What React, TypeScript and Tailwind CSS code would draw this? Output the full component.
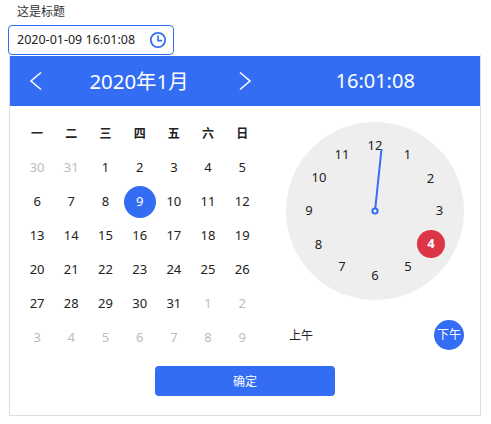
const font = { fontFamily: '"Noto Sans", "Noto Sans CJK SC", sans-serif' };

const weeks = ['一', '二', '三', '四', '五', '六', '日'];
type Day = { n: number; muted?: boolean; selected?: boolean };
const days: Day[] = [
  { n: 30, muted: true }, { n: 31, muted: true },
  ...Array.from({ length: 31 }, (_, i) => ({ n: i + 1, selected: i === 8 })),
  { n: 1, muted: true }, { n: 2, muted: true }, { n: 3, muted: true }, { n: 4, muted: true },
  { n: 5, muted: true }, { n: 6, muted: true }, { n: 7, muted: true }, { n: 8, muted: true }, { n: 9, muted: true },
];

// clock numbers: positions on the face, relative to the face's top-left (286,122)
const hours: [string, number, number][] = [
  ['12', 89, 23], ['1', 121.5, 32], ['2', 144.5, 56], ['3', 153.5, 88], ['5', 122, 144], ['6', 89, 153],
  ['7', 56, 144], ['8', 32.5, 122], ['9', 23, 88], ['10', 33, 55], ['11', 56, 32],
];

function ClockIcon() {
  return (
    <svg width="18" height="18" viewBox="0 0 18 18" fill="none" stroke="#336df4">
      <circle cx="9" cy="9" r="7.2" strokeWidth="1.8" />
      <path d="M9 4.6V9.6H13.2" strokeWidth="1.6" />
    </svg>
  );
}

function Chevron({ right }: { right?: boolean }) {
  return (
    <svg width="14" height="20" viewBox="0 0 14 20" fill="none" stroke="#fff" strokeWidth="1.6">
      <path d={right ? 'M2 1.5L12 10L2 18.5' : 'M12 1.5L2 10L12 18.5'} />
    </svg>
  );
}

export default function App() {
  return (
    <div className="w-[491px] h-[424px] bg-white overflow-hidden text-[#1f2329]" style={font}>
      <div className="pl-[17px] h-[25px] pt-[3px] text-[12px] leading-[18px] text-[#333]">这是标题</div>
      <div className="ml-2 w-[166px] h-[30px] border border-[#336df4] rounded-[4px] flex items-center justify-between pl-2 pr-[6px] text-[12.5px] text-[#222]">
        <span>2020-01-09 16:01:08</span>
        <ClockIcon />
      </div>
      <div className="ml-[9px] w-[472px] h-[361px] border border-[#dddddd] border-t-0 flex flex-col">
        <div className="h-[50px] mt-[1px] bg-[#336df4] text-white flex items-center">
          <div className="w-[260px] pl-[19px] pr-[18px] flex items-center justify-between">
            <Chevron />
            <span className="text-[20.4px] -ml-[3px]">2020年1月</span>
            <Chevron right />
          </div>
          <span className="ml-[65.5px] text-[20px]">16:01:08</span>
        </div>

        <div className="flex h-[260px]">
          <div className="pl-[10px] pt-[11px] w-[276px]">
            <div className="grid grid-cols-[repeat(7,34.2px)] auto-rows-[34px] items-center justify-items-center text-[13px]">
              {weeks.map((w) => (
                <span key={w} className="font-bold text-[12px] text-[#222]">{w}</span>
              ))}
              {days.map((d, i) => (
                <span
                  key={i}
                  className={
                    d.selected
                      ? 'w-8 h-8 rounded-full bg-[#336df4] text-white flex items-center justify-center'
                      : d.muted
                        ? 'text-[#bdbdbd]'
                        : 'text-[#222]'
                  }
                >
                  {d.n}
                </span>
              ))}
            </div>
          </div>

          <div className="pt-[16px] w-[178px]">
            <div className="relative w-[178px] h-[178px] rounded-full bg-[#eeeeee] text-[13px] text-[#222]">
              {hours.map(([t, x, y]) => (
                <span
                  key={t}
                  className="absolute -translate-x-1/2 -translate-y-1/2 leading-none"
                  style={{ left: x, top: y }}
                >
                  {t}
                </span>
              ))}
              <svg className="absolute inset-0" width="178" height="178" fill="none">
                <line x1="89" y1="89" x2="95.5" y2="27" stroke="#336df4" strokeWidth="2" />
                <circle cx="89" cy="89" r="2.6" fill="#fff" stroke="#336df4" strokeWidth="2" />
              </svg>
              <span className="absolute left-[131px] top-[108px] w-7 h-7 rounded-full bg-[#dc3545] text-white font-bold flex items-center justify-center">
                4
              </span>
            </div>
            <div className="mt-[20px] flex items-center justify-between text-[12px]">
              <span className="ml-[3px] pt-[2px]">上午</span>
              <span className="w-[30px] h-[30px] rounded-full bg-[#336df4] text-white flex items-center justify-center">下午</span>
            </div>
          </div>
        </div>

        <div className="flex justify-center">
          <button className="w-[180px] h-[30px] pt-[2px] rounded-[4px] bg-[#336df4] text-white text-[12px]">确定</button>
        </div>
      </div>
    </div>
  );
}
